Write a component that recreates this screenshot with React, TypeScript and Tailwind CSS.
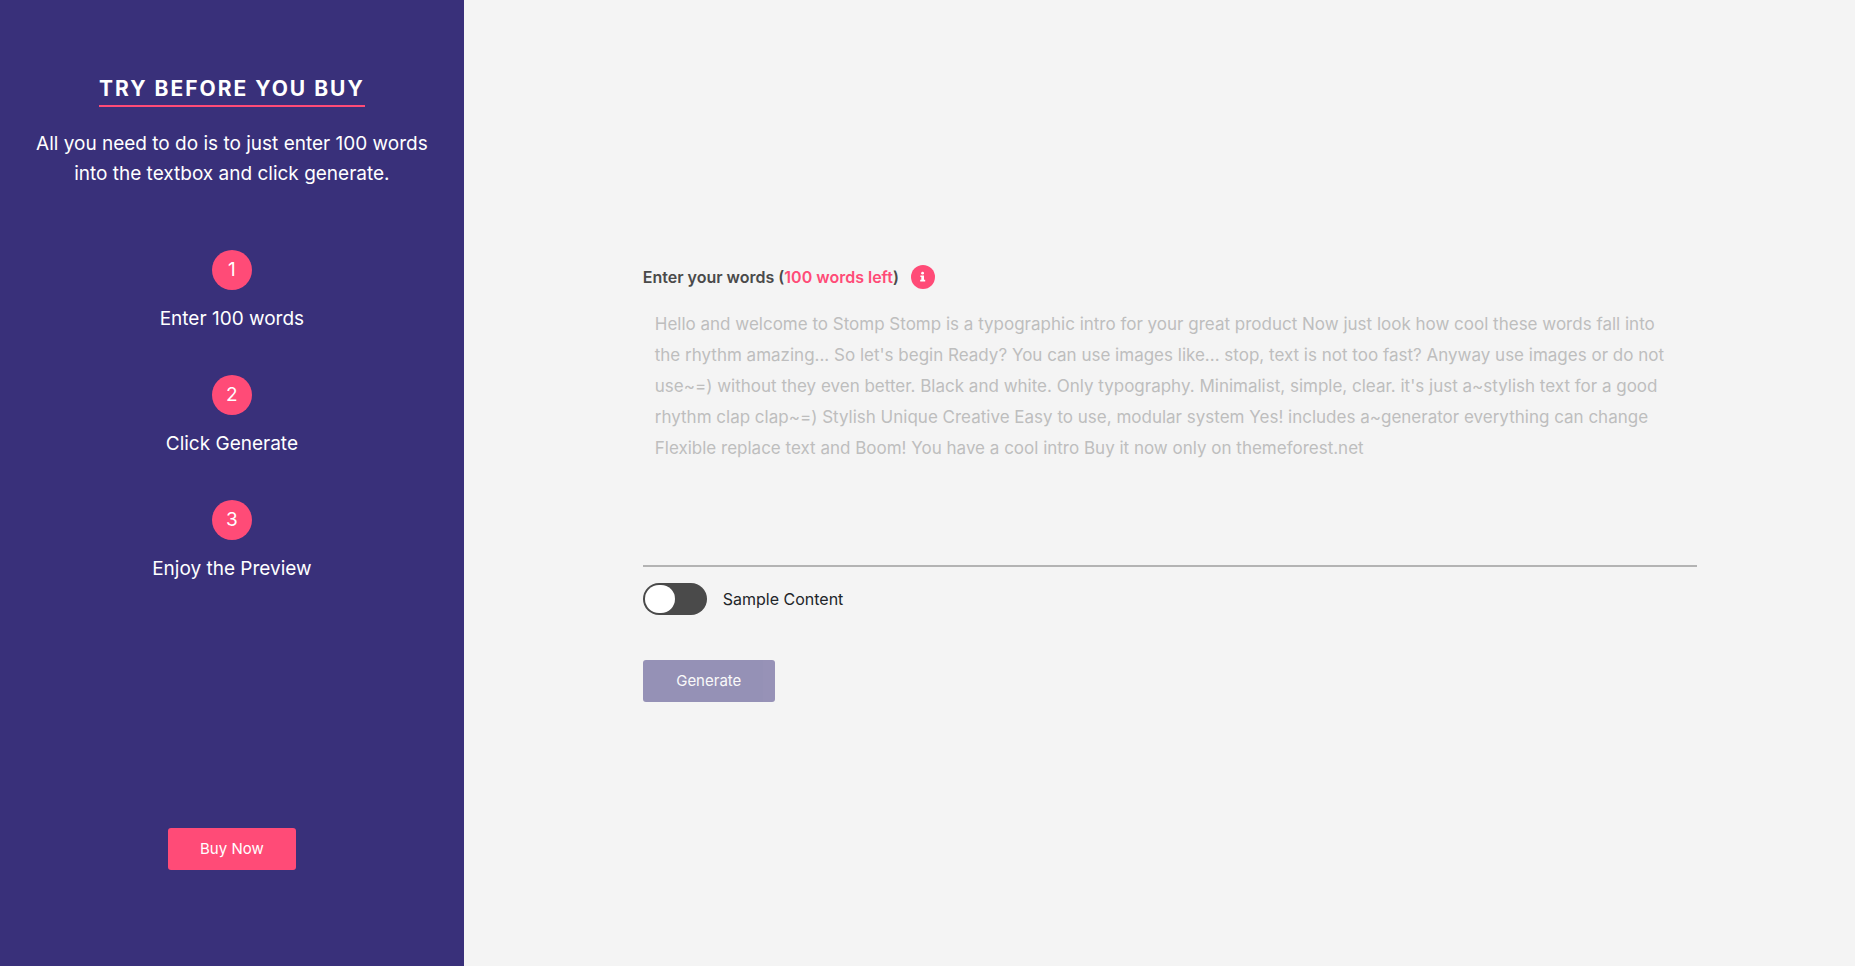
import { useState } from "react";

const steps = [
  { id: 1, title: "Enter 100 words" },
  { id: 2, title: "Click Generate" },
  { id: 3, title: "Enjoy the Preview" },
];

const sampleContent =
  "Hello and welcome to Stomp Stomp is a typographic intro for your great product Now just look how cool these words fall into the rhythm amazing... So let's begin Ready? You can use images like... stop, text is not too fast? Anyway use images or do not use~=) without they even better. Black and white. Only typography. Minimalist, simple, clear. it's just a~stylish text for a good rhythm clap clap~=) Stylish Unique Creative Easy to use, modular system Yes! includes a~generator everything can change Flexible replace text and Boom! You have a cool intro Buy it now only on themeforest.net";

const maxWords = 100;

const countWords = (text: string) => text.split(/\s+/).filter(Boolean).length;

const InfoIcon = () => (
  <svg viewBox="0 0 24 24" className="w-6 h-6" aria-hidden="true">
    <circle cx="12" cy="12" r="12" fill="#ff4b77" />
    <circle cx="11.6" cy="8.2" r="1.4" fill="#fff" />
    <path d="M9.4 10.4h3.6v4.4h1.2v1.7H9.2v-1.7h1.1v-2.7h-.9z" fill="#fff" />
  </svg>
);

const Sidebar = () => {
  return (
    <aside className="w-1/4 flex flex-col items-center px-8 pt-[73px] pb-24 bg-[#39307a] text-white text-center">
      <h1 className="border-b-2 border-[#ff4b77] text-[21px] leading-8 font-bold tracking-[2px]">
        TRY BEFORE YOU BUY
      </h1>
      <p className="mt-[22px] text-[19px] leading-[30px]">
        All you need to do is to just enter 100 words into the textbox and click
        generate.
      </p>
      <ol className="mt-[61px] flex flex-col gap-[41px]">
        {steps.map((step) => (
          <li key={step.id} className="flex flex-col items-center gap-[14px]">
            <span className="flex items-center justify-center w-10 h-10 rounded-full bg-[#ff4b77] text-[19px]">
              {step.id}
            </span>
            <span className="text-[19px] leading-[30px]">{step.title}</span>
          </li>
        ))}
      </ol>
      <button
        type="button"
        className="mt-auto min-w-32 px-8 h-[42px] rounded-[3px] bg-[#ff4b77] text-[15px]"
      >
        Buy Now
      </button>
    </aside>
  );
};

const GenerateForm = () => {
  const [words, setWords] = useState("");
  const wordsLeft = Math.max(0, maxWords - countWords(words));

  return (
    <form
      className="flex flex-col items-start w-full"
      onSubmit={(e) => e.preventDefault()}
    >
      <div className="flex items-center gap-3">
        <label
          htmlFor="words"
          className="text-base leading-6 font-semibold text-[#4a4a4a]"
        >
          Enter your words (
          <span className="text-[#ff4b77]">{wordsLeft} words left</span>)
        </label>
        <button type="button" aria-label="More information">
          <InfoIcon />
        </button>
      </div>
      <textarea
        id="words"
        value={words}
        onChange={(e) => setWords(e.target.value)}
        placeholder={sampleContent}
        className="block mt-2 w-full h-[270px] pl-3 pr-4 py-3 resize-none outline-none border-b-2 border-[#b3b3b3] text-[17px] leading-[31px] text-[#4a4a4a] placeholder:text-[#bebebe]"
      />
      <div className="mt-4 flex items-center gap-4">
        <input
          id="sample"
          type="checkbox"
          checked={words === sampleContent}
          onChange={(e) => setWords(e.target.checked ? sampleContent : "")}
          className="appearance-none flex w-16 h-8 p-[2px] rounded-full bg-[#4a4a4a] cursor-pointer before:w-[30px] before:h-7 before:rounded-full before:bg-white checked:justify-end checked:bg-[#ff4b77]"
        />
        <label htmlFor="sample" className="text-base text-[#212529]">
          Sample Content
        </label>
      </div>
      <button
        type="submit"
        disabled={!words}
        className="mt-[45px] min-w-33 px-8 h-[42px] rounded-[3px] bg-[#39307a] text-[15px] text-white disabled:opacity-50"
      >
        Generate
      </button>
    </form>
  );
};

export default function App() {
  return (
    <div className="flex min-h-screen font-['Inter',sans-serif]">
      <Sidebar />
      <main className="w-3/4 flex items-center pt-px pl-[179px] pr-[158px] bg-[#f4f4f4]">
        <GenerateForm />
      </main>
    </div>
  );
}
